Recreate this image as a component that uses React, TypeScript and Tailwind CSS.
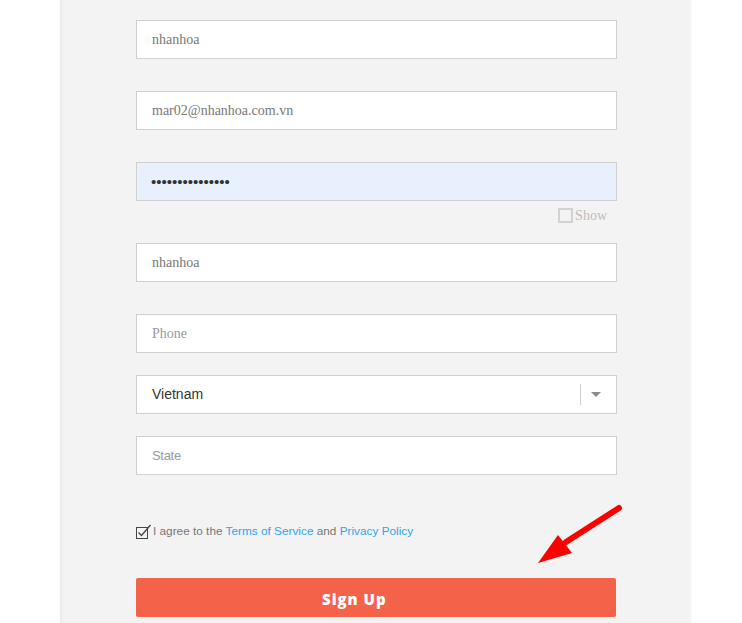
import React from "react";

const serif = { fontFamily: '"Liberation Serif", "Times New Roman", serif' };

function Field({ value, placeholder, bg = "bg-white" }: { value?: string; placeholder?: string; bg?: string }) {
  return (
    <div
      className={`h-[39px] w-[481px] border border-[#cfcfcf] ${bg} flex items-center pl-[15px] text-[14px]`}
      style={serif}
    >
      {value ? (
        <span className="text-[#777]">{value}</span>
      ) : (
        <span className="text-[#999]">{placeholder}</span>
      )}
    </div>
  );
}

export default function App() {
  return (
    <div className="relative w-full h-[623px] bg-white overflow-hidden" style={{ fontFamily: '"Liberation Sans", Arial, sans-serif' }}>
      <div className="ml-[60px] w-[632px] h-full bg-[#f3f3f3] border-l-2 border-r-2 border-l-[#ebebeb] border-r-[#f8f8f8]">
        <div className="pl-[74px] pt-[20px] flex flex-col">
          <Field value="nhanhoa" />
          <div className="mt-[32px]">
            <Field value="mar02@nhanhoa.com.vn" />
          </div>
          <div className="mt-[32px]">
            <div className="h-[39px] w-[481px] border border-[#cfcfcf] bg-[#e8f0fe] flex items-center pl-[14px]">
              <span className="text-[#333] text-[15px] leading-none" style={{ fontFamily: '"Liberation Sans", Arial, sans-serif' }}>
                •••••••••••••••
              </span>
            </div>
          </div>
          <div className="mt-[7px] w-[481px] h-[15px] flex justify-end items-center pr-[10px]">
            <span className="w-[15px] h-[15px] border-2 border-[#d2d2d2] bg-[#f3f3f3]" />
            <span className="ml-[2px] text-[14px] text-[#bdbdbd] leading-none" style={serif}>Show</span>
          </div>
          <div className="mt-[20px]">
            <Field value="nhanhoa" />
          </div>
          <div className="mt-[32px]">
            <Field placeholder="Phone" />
          </div>
          <div className="mt-[22px]">
            <div className="h-[39px] w-[481px] border border-[#cfcfcf] bg-white flex items-center pl-[15px] pr-[5px] text-[14px] text-[#333]">
              <span className="flex-1">Vietnam</span>
              <span className="w-px h-[21px] bg-[#cccccc]" />
              <span className="w-[30px] flex justify-center">
                <svg width="10" height="6" viewBox="0 0 10 6">
                  <path d="M0 0 L10 0 L5 5 Z" fill="#8a8a8a" />
                </svg>
              </span>
            </div>
          </div>
          <div className="mt-[22px]">
            <div className="h-[39px] w-[481px] border border-[#cfcfcf] bg-white flex items-center pl-[15px]">
              <span className="text-[13px] text-[#9a9a9a] tracking-[-0.3px]" style={{ fontFamily: '"Liberation Sans", Arial, sans-serif' }}>State</span>
            </div>
          </div>
          <div className="mt-[49px] h-[16px] flex items-center">
            <svg width="16" height="16" viewBox="0 0 16 16" className="-mt-[3px]">
              <rect x="0.5" y="4.5" width="11" height="11" fill="none" stroke="#444" strokeWidth="1" />
              <path d="M2.5 9.5 L5.5 12.5 L14.5 2" fill="none" stroke="#444" strokeWidth="1.3" />
            </svg>
            <span className="ml-[1px] text-[11.8px] text-[#777]">
              I agree to the <span className="text-[#2ea3f2]">Terms of Service</span> and{" "}
              <span className="text-[#2ea3f2]">Privacy Policy</span>
            </span>
          </div>
          <div className="mt-[38px] h-[39px] w-[480px] bg-[#f4624a] rounded-[2px] flex items-center pl-[186px] pt-[3px]">
            <span className="text-white text-[15px] font-extrabold tracking-[1px]" style={{ fontFamily: '"Open Sans", sans-serif' }}>
              Sign Up
            </span>
          </div>
        </div>
      </div>
      <svg className="absolute left-0 top-0 pointer-events-none" width="742" height="623" viewBox="0 0 742 623">
        <line x1="619" y1="508" x2="566" y2="542" stroke="#ff0000" strokeWidth="6" strokeLinecap="round" />
        <path d="M538 563 L558 535 L572 553 Z" fill="#ff0000" />
      </svg>
    </div>
  );
}
